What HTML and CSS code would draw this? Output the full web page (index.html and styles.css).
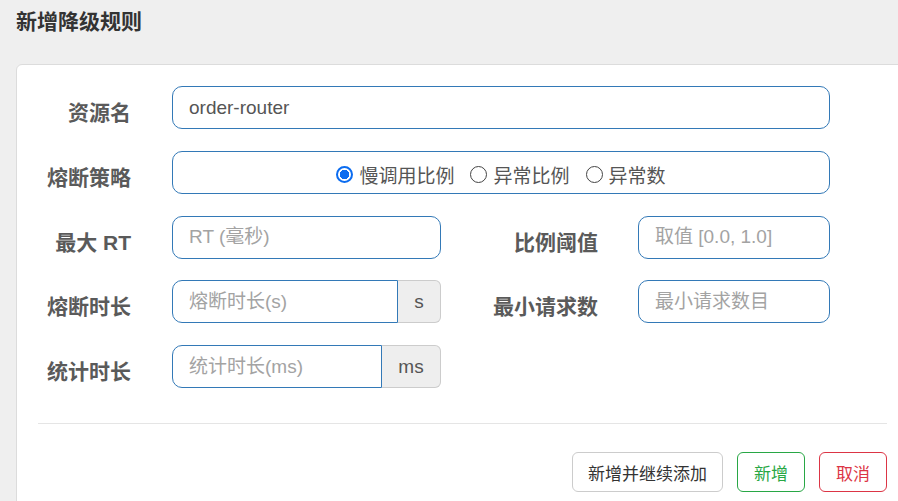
FILE: index.html
```html
<!DOCTYPE html>
<html lang="zh-CN">
<head>
<meta charset="utf-8">
<title>新增降级规则</title>
<link rel="stylesheet" href="styles.css">
</head>
<body>
<div class="page">
  <h1 class="title">新增降级规则</h1>
  <div class="card">
    <form class="form">
      <label class="label">资源名</label>
      <div class="field span3">
        <input class="input" type="text" value="order-router">
      </div>

      <label class="label">熔断策略</label>
      <div class="field span3">
        <div class="radio-box">
          <label class="radio"><input type="radio" name="grade" checked><span>慢调用比例</span></label>
          <label class="radio"><input type="radio" name="grade"><span>异常比例</span></label>
          <label class="radio"><input type="radio" name="grade"><span>异常数</span></label>
        </div>
      </div>

      <label class="label">最大 RT</label>
      <div class="field">
        <input class="input" type="text" placeholder="RT (毫秒)">
      </div>
      <label class="label label-right">比例阈值</label>
      <div class="field">
        <input class="input" type="text" placeholder="取值 [0.0, 1.0]">
      </div>

      <label class="label">熔断时长</label>
      <div class="field">
        <div class="group">
          <input class="input input-grouped" type="text" placeholder="熔断时长(s)">
          <span class="addon addon-s">s</span>
        </div>
      </div>
      <label class="label label-right">最小请求数</label>
      <div class="field">
        <input class="input" type="text" placeholder="最小请求数目">
      </div>

      <label class="label">统计时长</label>
      <div class="field">
        <div class="group">
          <input class="input input-grouped" type="text" placeholder="统计时长(ms)">
          <span class="addon addon-ms">ms</span>
        </div>
      </div>
    </form>
    <div class="divider"></div>
    <div class="actions">
      <button class="btn btn-default" type="button">新增并继续添加</button>
      <button class="btn btn-success" type="button">新增</button>
      <button class="btn btn-danger" type="button">取消</button>
    </div>
  </div>
</div>
</body>
</html>
```

FILE: styles.css
```css
html, body {
  margin: 0;
  padding: 0;
  overflow: hidden;
  background: #efefef;
  height: 100%;
}

body {
  font-family: "Liberation Sans", "Noto Sans CJK SC", sans-serif;
  color: #555;
}

.page {
  padding: 7px 0 0 16px;
}

.title {
  margin: 0;
  font-size: 21px;
  line-height: 30px;
  font-weight: 700;
  color: #333;
}

.card {
  margin-top: 27px;
  box-sizing: border-box;
  width: 893px;
  background: #fff;
  border: 1px solid #dcdcdc;
  border-radius: 6px;
  padding: 21px 21px 40px 21px;
}

.form {
  display: grid;
  grid-template-columns: 134px 269px 197px 192px;
  grid-auto-rows: 43px;
  row-gap: 21.75px;
}

.label {
  font-size: 21px;
  font-weight: 700;
  color: #5a5a5a;
  text-align: right;
  padding-right: 41px;
  padding-top: 13px;
  line-height: 27px;
  white-space: nowrap;
}

.label-right {
  padding-right: 40px;
}

.field {
  display: flex;
  min-width: 0;
}

.span3 {
  grid-column: 2 / 5;
}

.input {
  flex: 1 1 0;
  width: 0;
  min-width: 0;
  height: 43px;
  box-sizing: border-box;
  border: 1px solid #3379b7;
  border-radius: 10px;
  padding: 0 16px;
  font-family: "Liberation Sans", "Noto Sans CJK SC", sans-serif;
  font-size: 19px;
  color: #555;
  background: #fff;
  outline: none;
}

.input::placeholder {
  color: #a3a3a3;
}

.group {
  display: flex;
  flex: 1 1 0;
  min-width: 0;
}

.input-grouped {
  border-radius: 10px 0 0 10px;
}

.addon {
  flex: none;
  display: flex;
  align-items: center;
  justify-content: center;
  box-sizing: border-box;
  height: 43px;
  background: #eee;
  border: 1px solid #ccc;
  border-left: none;
  border-radius: 0 6px 6px 0;
  font-size: 19px;
  color: #555;
}

.addon-s {
  width: 43px;
}

.addon-ms {
  width: 59px;
}

.radio-box {
  flex: 1;
  height: 43px;
  box-sizing: border-box;
  border: 1px solid #3379b7;
  border-radius: 10px;
  display: flex;
  align-items: center;
  justify-content: center;
  gap: 16px;
  padding-top: 4px;
}

.radio {
  display: flex;
  align-items: center;
  gap: 6px;
  font-size: 19px;
  color: #555;
}

.radio input {
  appearance: none;
  -webkit-appearance: none;
  margin: 0;
  width: 17px;
  height: 17px;
  box-sizing: border-box;
  border: 1.5px solid #444;
  border-radius: 50%;
  background: #fff;
}

.radio input:checked {
  border: 2px solid #0b6cf0;
  background: radial-gradient(circle, #0b6cf0 0 4.5px, #fff 5px);
}

.divider {
  margin-top: 35px;
  height: 1px;
  background: #e5e5e5;
}

.actions {
  margin-top: 28px;
  display: flex;
  justify-content: flex-end;
  gap: 14px;
}

.btn {
  height: 40px;
  padding: 0 16px;
  box-sizing: border-box;
  background: #fff;
  border: 1px solid #ccc;
  border-radius: 6px;
  font-family: "Liberation Sans", "Noto Sans CJK SC", sans-serif;
  font-size: 17px;
  color: #333;
}

.btn-default {
  padding: 0 15px;
}

.btn-success {
  border-color: #28a745;
  color: #28a745;
}

.btn-danger {
  border-color: #dc3545;
  color: #dc3545;
}
```
